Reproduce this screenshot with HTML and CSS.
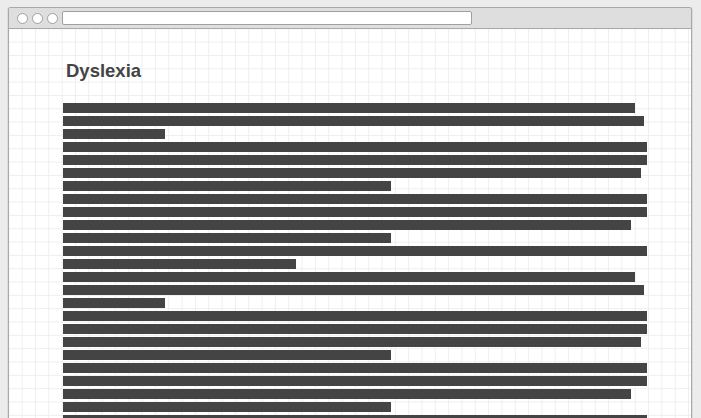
FILE: index.html
```html
<!DOCTYPE html>
<html lang="en">
<head>
    <meta charset="UTF-8" />
    <title>Dyslexia</title>
    <link rel="stylesheet" href="styles.css">
</head>
<body>
    <div class="window">
        <div class="titlebar">
            <span class="dot"></span>
            <span class="dot"></span>
            <span class="dot"></span>
            <span class="address"></span>
        </div>
        <div class="content">
            <h2>Dyslexia</h2>
            <div class="text">
                <div class="line" style="width: 572px"></div>
                <div class="line" style="width: 581px"></div>
                <div class="line" style="width: 102px"></div>
                <div class="line" style="width: 584px"></div>
                <div class="line" style="width: 584px"></div>
                <div class="line" style="width: 578px"></div>
                <div class="line" style="width: 328px"></div>
                <div class="line" style="width: 584px"></div>
                <div class="line" style="width: 584px"></div>
                <div class="line" style="width: 568px"></div>
                <div class="line" style="width: 328px"></div>
                <div class="line" style="width: 584px"></div>
                <div class="line" style="width: 233px"></div>
                <div class="line" style="width: 572px"></div>
                <div class="line" style="width: 581px"></div>
                <div class="line" style="width: 102px"></div>
                <div class="line" style="width: 584px"></div>
                <div class="line" style="width: 584px"></div>
                <div class="line" style="width: 578px"></div>
                <div class="line" style="width: 328px"></div>
                <div class="line" style="width: 584px"></div>
                <div class="line" style="width: 584px"></div>
                <div class="line" style="width: 568px"></div>
                <div class="line" style="width: 328px"></div>
                <div class="line" style="width: 584px"></div>
            </div>
        </div>
    </div>
</body>
</html>
```

FILE: styles.css
```css
html, body {
    margin: 0;
    height: 100%;
    overflow: hidden;
}

body {
    font-family: "Liberation Sans", Arial, sans-serif;
    background-color: #ececec;
    padding: 7px 9px 0 8px;
    box-sizing: border-box;
}

.window {
    border: 1px solid #a8a8a8;
    border-bottom: none;
    border-radius: 3px 3px 0 0;
    background-color: #fff;
    box-shadow: -1px 0 0 #dcdcdc, 1px 0 0 #dcdcdc;
    height: 100%;
    overflow: hidden;
}

.titlebar {
    display: flex;
    align-items: center;
    gap: 4px;
    height: 20px;
    padding-left: 8px;
    background-color: #dedede;
    border-bottom: 1px solid #a8a8a8;
    border-radius: 2px 2px 0 0;
}

.dot {
    width: 9px;
    height: 9px;
    border: 1px solid #a0a0a0;
    border-radius: 50%;
    background-color: #fff;
}

.address {
    width: 408px;
    height: 12px;
    border: 1px solid #a0a0a0;
    border-radius: 2px;
    background-color: #fff;
}

.content {
    padding: 31px 0 0 54px;
    background-color: #fff;
    background-image:
        linear-gradient(to right, #eeeeee 1px, transparent 1px),
        linear-gradient(to bottom, #eeeeee 1px, transparent 1px);
    background-size: 13.333px 13.333px;
    background-position: -0.7px -0.7px;
    height: 100%;
}

h2 {
    margin: 0 0 21px 3px;
    font-size: 18.5px;
    font-weight: bold;
    line-height: 22px;
    color: #444;
}

.text {
    display: flex;
    flex-direction: column;
    gap: 3px;
}

.line {
    height: 10px;
    background-color: #444;
}
```
